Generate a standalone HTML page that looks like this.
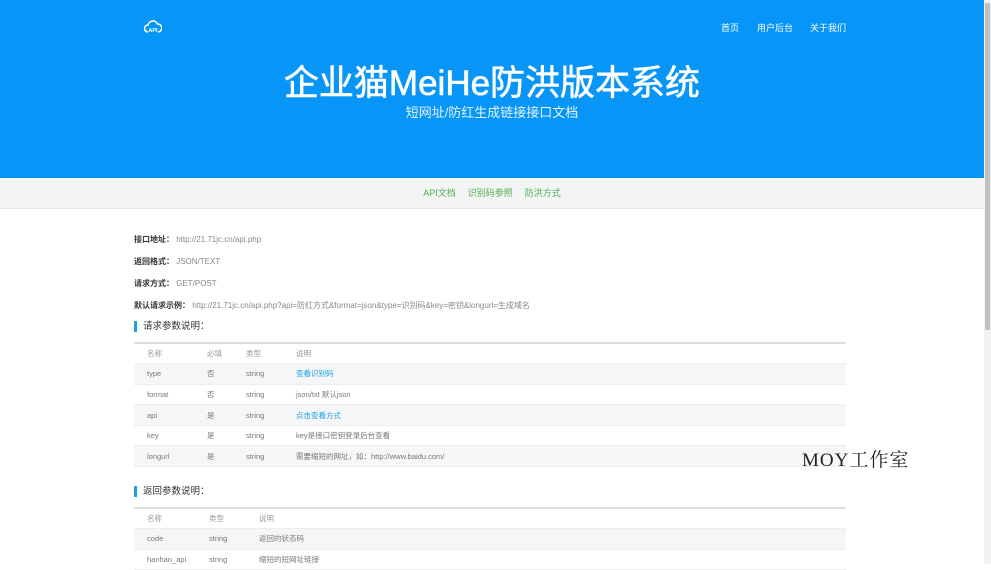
<!DOCTYPE html>
<html><head><meta charset="utf-8"><style>
*{margin:0;padding:0;box-sizing:border-box}
body{width:991px;height:564px;overflow:hidden;background:#fff;font-family:"Liberation Sans","Noto Sans CJK SC",sans-serif;position:relative}
.hd{position:absolute;left:0;top:0;width:984px;height:178px;background:#0796f8;color:#fff}
.logo{position:absolute;left:144px;top:19px}
.nav{position:absolute;top:21px;font-size:9px;color:#fff}
h1{position:absolute;left:0;width:984px;top:55px;text-align:center;font-size:35px;font-weight:normal;-webkit-text-stroke:0.6px #fff}
.sub{position:absolute;left:0;width:984px;top:102px;text-align:center;font-size:13px;color:#e6f3ff}
.bar{position:absolute;left:0;top:178px;width:984px;height:31px;background:#f4f4f4;border-bottom:1px solid #e6e6e6;text-align:center;font-size:9px;color:#4caf50;line-height:31px}
.bar span{margin:0 6px}
.info{position:absolute;left:134px;font-size:8px;color:#888}
.info b{color:#333;font-weight:bold}
.sec{position:absolute;left:134px;font-size:9.5px;color:#333;border-left:3px solid #1a9fe0;padding-left:6px;height:11px;line-height:11px}
table{position:absolute;left:134px;width:712px;border-collapse:collapse;font-size:7.5px;color:#777}
td{height:20.6px;padding-left:13px;border-bottom:1px solid #eee}
tr.g td{background:#f5f6f8}
tr.h td{border-top:2px solid #ddd;color:#999}
a{color:#1a9fe0;text-decoration:none}
.sb{position:absolute;left:984px;top:0;width:7px;height:564px;background:#f1f1f1}
.th{position:absolute;left:985px;top:3px;width:5px;height:327px;background:#c1c1c1}
.moy{position:absolute;left:802px;top:445px;font-family:"Liberation Serif","Noto Serif CJK SC",serif;font-size:19px;color:#222;letter-spacing:1px}
</style></head><body>
<div class="hd">
<svg class="logo" width="18" height="15" viewBox="0 0 18 15"><path d="M4 13a3.5 3.5 0 0 1 0-7 5 5 0 0 1 9.5-1 3.5 3.5 0 0 1 .5 8" fill="none" stroke="#fff" stroke-width="1.6"/><text x="9" y="13" font-size="5.5" font-weight="bold" fill="#fff" text-anchor="middle" font-family="Liberation Sans">API</text></svg>
<div class="nav" style="left:721px">首页</div>
<div class="nav" style="left:757px">用户后台</div>
<div class="nav" style="left:810px">关于我们</div>
<h1>企业猫MeiHe防洪版本系统</h1>
<div class="sub">短网址/防红生成链接接口文档</div>
</div>
<div class="bar"><span>API文档</span><span>识别码参照</span><span>防洪方式</span></div>
<div class="info" style="top:234px"><b>接口地址：</b> http://21.71jc.cn/api.php</div>
<div class="info" style="top:256px"><b>返回格式：</b> JSON/TEXT</div>
<div class="info" style="top:278px"><b>请求方式：</b> GET/POST</div>
<div class="info" style="top:300px"><b>默认请求示例：</b> http://21.71jc.cn/api.php?api=防红方式&amp;format=json&amp;type=识别码&amp;key=密钥&amp;longurl=生成域名</div>
<div class="sec" style="top:321px">请求参数说明：</div>
<table style="top:342px">
<tr class="h"><td style="width:60px">名称</td><td style="width:39px">必填</td><td style="width:50px">类型</td><td>说明</td></tr>
<tr class="g"><td>type</td><td>否</td><td>string</td><td><a>查看识别码</a></td></tr>
<tr><td>format</td><td>否</td><td>string</td><td>json/txt 默认json</td></tr>
<tr class="g"><td>api</td><td>是</td><td>string</td><td><a>点击查看方式</a></td></tr>
<tr><td>key</td><td>是</td><td>string</td><td>key是接口密钥登录后台查看</td></tr>
<tr class="g"><td>longurl</td><td>是</td><td>string</td><td>需要缩短的网址，如：http://www.baidu.com/</td></tr>
</table>
<div class="sec" style="top:486px">返回参数说明：</div>
<table style="top:507px">
<tr class="h"><td style="width:62px">名称</td><td style="width:50px">类型</td><td>说明</td></tr>
<tr class="g"><td>code</td><td>string</td><td>返回的状态码</td></tr>
<tr><td>hanhan_api</td><td>string</td><td>缩短的短网址链接</td></tr>
</table>
<div class="moy">MOY工作室</div>
<div class="sb"></div><div class="th"></div>
</body></html>
